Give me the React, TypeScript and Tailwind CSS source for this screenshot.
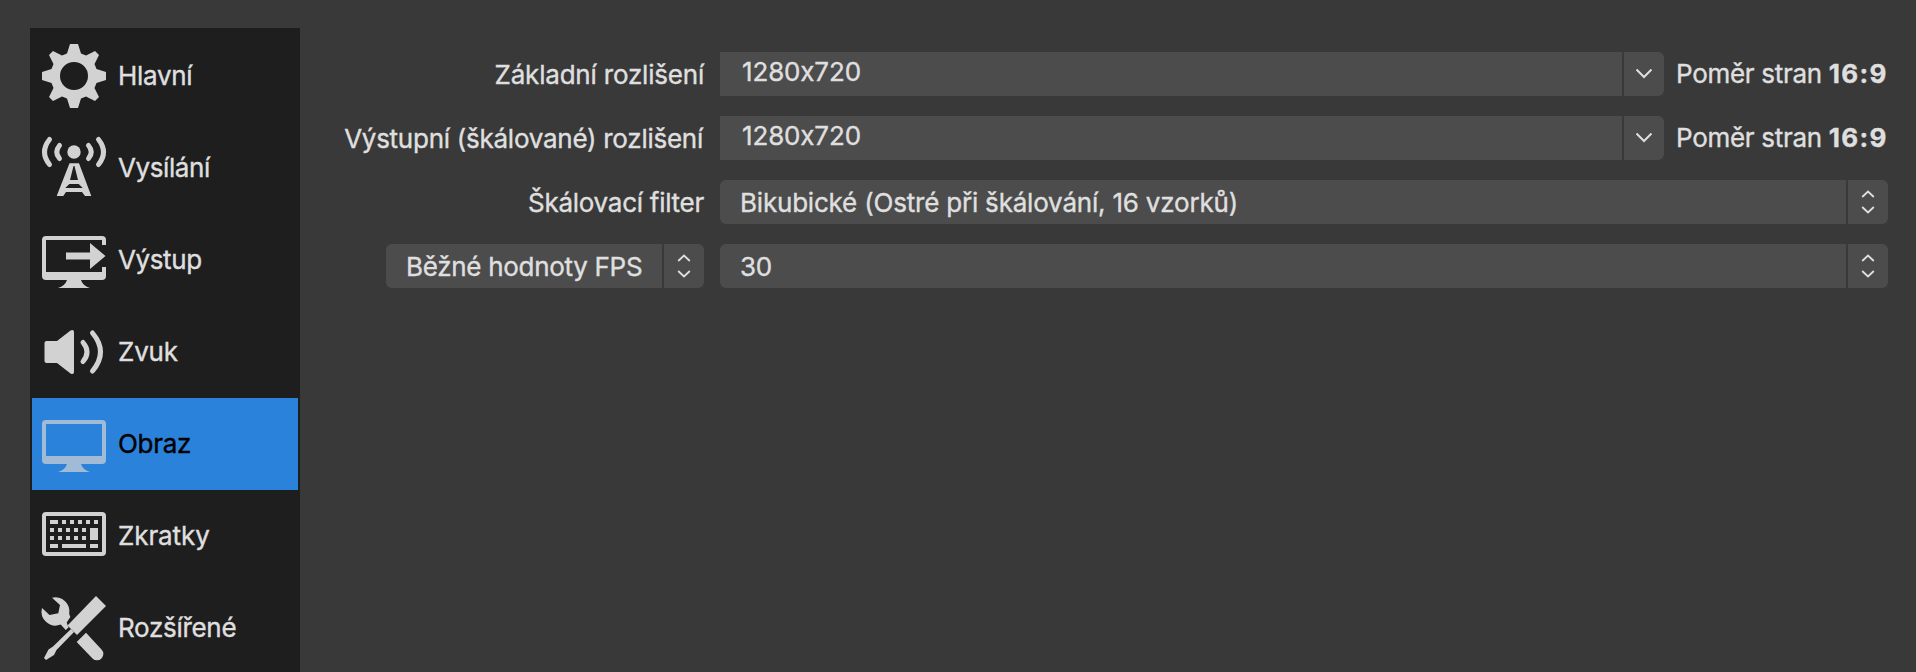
import React, { useState } from 'react';

interface NavItem {
  id: string;
  label: string;
  tracking: string;
  icon: React.ReactNode;
}

const navItems: NavItem[] = [
  {
    id: 'general',
    label: 'Hlavní',
    tracking: 'tracking-[-0.3px]',
    icon: (
      <path
        fillRule="evenodd"
        d="M28 0h8l3 9.500 5 2 9-4.500 4 4 -4.500 9 2 5 9.500 3v8l-9.500 3-2 5 4.500 9-4 4-9-4.500-5 2-3 9.500h-8l-3-9.500-5-2-9 4.500-4-4 4.500-9-2-5L0 36v-8l9.500-3 2-5L7 11l4-4 9 4.500 5-2zM32 18a14 14 0 1 0 0 28a14 14 0 1 0 0-28z"
      />
    ),
  },
  {
    id: 'stream',
    label: 'Vysílání',
    tracking: 'tracking-[-0.4px]',
    icon: (
      <>
        <circle cx="32" cy="16" r="6.700" />
        <g fill="none" stroke="currentColor" strokeWidth="5" strokeLinecap="round">
          <path d="M7.500 3.500Q-2.500 16 7.500 28.500" />
          <path d="M56.500 3.500Q66.500 16 56.500 28.500" />
          <path d="M17.500 9.500Q12 16 17.500 22.500" />
          <path d="M46.500 9.500Q52 16 46.500 22.500" />
        </g>
        <path
          fillRule="evenodd"
          d="M27.500 27.300h9.500L49.300 60H43l-3-4H24l-2.700 4h-6.600zM31.500 30L28 44h8l-3.500-14zM27.300 48l-4 4h17.400l-4-4z"
        />
      </>
    ),
  },
  {
    id: 'output',
    label: 'Výstup',
    tracking: 'tracking-[-0.4px]',
    icon: (
      <>
        <path d="M4 8h56a4 4 0 0 1 4 4v5h-4v-5H4v32h56v-5h4v9a4 4 0 0 1-4 4H39q2 6 9 8H16q7-2 9-8H4a4 4 0 0 1-4-4V12a4 4 0 0 1 4-4z" />
        <path d="M24 24.500h24v-9.500L63.500 28 48 41v-9.500H24z" />
      </>
    ),
  },
  {
    id: 'audio',
    label: 'Zvuk',
    tracking: 'tracking-[-0.2px]',
    icon: (
      <>
        <path d="M4.500 21h10.500L28.500 10.500q3.500-1.500 3.500 1.500v40q0 3-3.500 1.500L15 43H4.500Q2.500 43 2.500 41V23q0-2 2-2z" />
        <g fill="none" stroke="currentColor" strokeWidth="5" strokeLinecap="round">
          <path d="M41 22.500Q49 32 41 41.500" />
          <path d="M50.500 13Q66.500 32 50.500 51" />
        </g>
      </>
    ),
  },
  {
    id: 'video',
    label: 'Obraz',
    tracking: 'tracking-[-0.3px]',
    icon: (
      <path
        fillRule="evenodd"
        d="M4 8h56a4 4 0 0 1 4 4v36a4 4 0 0 1-4 4H39q2 6 9 8H16q7-2 9-8H4a4 4 0 0 1-4-4V12a4 4 0 0 1 4-4zM4 12v32h56V12z"
      />
    ),
  },
  {
    id: 'hotkeys',
    label: 'Zkratky',
    tracking: 'tracking-[-0.1px]',
    icon: (
      <>
        <path
          fillRule="evenodd"
          d="M4 8h56a4 4 0 0 1 4 4v36a4 4 0 0 1-4 4H4a4 4 0 0 1-4-4V12a4 4 0 0 1 4-4zM4 12v36h56V12z"
        />
        <path d="M8 16h8v4H8zM20 16h4v4h-4zM28 16h4v4h-4zM36 16h4v4h-4zM44 16h4v4h-4zM52 16h4v4h-4z" />
        <path d="M8 24h4v4H8zM16 24h4v4h-4zM24 24h4v4h-4zM32 24h4v4h-4zM40 24h4v4h-4zM48 24h8v12h-8z" />
        <path d="M8 32h4v4H8zM16 32h4v4h-4zM24 32h4v4h-4zM32 32h4v4h-4zM40 32h4v4h-4z" />
        <path d="M8 40h8v4H8zM20 40h24v4H20zM48 40h8v4h-8z" />
      </>
    ),
  },
  {
    id: 'advanced',
    label: 'Rozšířené',
    tracking: 'tracking-[-0.3px]',
    icon: (
      <>
        <path d="M54 0l10 10-29 29-9.500-9.500z" />
        <path d="M29 33l3 3-17.500 18L12 59l-8 5-2-2 4.500-8.500 4.500-3z" />
        <path d="M44 36.700L59.500 53.500a6.300 6.300 0 0 1-9 9L34.700 46z" />
        <path d="M10 1.800A14 14 0 0 1 27.200 18l1.100 3-3.600 5.500 1.800 5-2.800 2.500-5-5.400A14 14 0 0 1 0 12l7.500 7 8.800-1.700L18 9z" />
      </>
    ),
  },
];

function Chevrons() {
  return (
    <svg width="14" height="26" viewBox="0 0 14 26" fill="none" stroke="currentColor" strokeWidth="1.8">
      <path d="M1.200 8L7 2.500 12.800 8M1.200 18L7 23.500 12.800 18" />
    </svg>
  );
}

function ComboBox({ value }: { value: string }) {
  return (
    <div className="flex h-11 flex-1 gap-0.5">
      <div className="flex-1 bg-[#4c4c4c] pl-[22px] leading-[40px] tracking-[-0.15px]">{value}</div>
      <button className="flex w-10 items-center justify-center rounded-r-[6px] bg-[#4c4c4c]">
        <svg width="18" height="12" viewBox="0 0 18 12" fill="none" stroke="currentColor" strokeWidth="2">
          <path d="M1.500 1.500L9 9l7.500-7.500" />
        </svg>
      </button>
    </div>
  );
}

function PopupButton({ value, narrow }: { value: string; narrow?: boolean }) {
  return (
    <div className={`flex h-11 gap-0.5 ${narrow ? 'w-[318px] tracking-[-0.3px]' : 'flex-1 tracking-[-0.2px]'}`}>
      <div className="flex-1 rounded-l-[6px] bg-[#4c4c4c] pl-5 leading-[45px] whitespace-nowrap">{value}</div>
      <button className="flex w-10 items-center justify-center rounded-r-[6px] bg-[#4c4c4c]">
        <Chevrons />
      </button>
    </div>
  );
}

function RowLabel({ text, tracking }: { text: string; tracking: string }) {
  return (
    <div className={`mr-4 w-[404px] text-right leading-[46px] whitespace-nowrap ${tracking}`}>{text}</div>
  );
}

function AspectRatio() {
  return (
    <div className="w-[224px] pl-3 leading-[44px] tracking-[-0.3px] whitespace-nowrap">
      Poměr stran <span className="font-bold tracking-[1.3px]">16:9</span>
    </div>
  );
}

export default function App() {
  const [active, setActive] = useState('video');

  return (
    <div className="flex h-[672px] w-[1916px] overflow-hidden bg-[#393939] pt-7 pl-[30px] font-['Inter','Liberation_Sans',sans-serif] text-[26px] text-[#dfdfdf] [-webkit-text-stroke:0.4px]">
      {/* Sections */}
      <nav className="h-[660px] w-[270px] shrink-0 bg-[#1e1e1e] p-0.5">
        {navItems.map((item) => (
          <div
            key={item.id}
            onClick={() => setActive(item.id)}
            className={`flex h-[92px] items-center pl-2.5 ${active === item.id ? 'bg-[#2a82da] text-black' : ''}`}
          >
            <svg
              width="64"
              height="64"
              viewBox="0 0 64 64"
              fill="currentColor"
              className={`shrink-0 overflow-visible ${active === item.id ? 'text-[#a1bbd6]' : 'text-[#d2d2d2]'}`}
            >
              {item.icon}
            </svg>
            <span className={`pl-3 leading-[32px] ${item.tracking}`}>{item.label}</span>
          </div>
        ))}
      </nav>

      {/* Video settings */}
      <div className="flex flex-1 flex-col gap-5 pt-6 pr-7">
        <div className="flex h-11">
          <RowLabel text="Základní rozlišení" tracking="tracking-[-0.2px]" />
          <ComboBox value="1280x720" />
          <AspectRatio />
        </div>
        <div className="flex h-11">
          <RowLabel text="Výstupní (škálované) rozlišení" tracking="pr-px tracking-[-0.26px]" />
          <ComboBox value="1280x720" />
          <AspectRatio />
        </div>
        <div className="flex h-11">
          <RowLabel text="Škálovací filter" tracking="tracking-[-0.27px]" />
          <PopupButton value="Bikubické (Ostré při škálování, 16 vzorků)" />
        </div>
        <div className="flex h-11">
          <div className="mr-4 flex w-[404px] justify-end">
            <PopupButton value="Běžné hodnoty FPS" narrow />
          </div>
          <PopupButton value="30" />
        </div>
      </div>
    </div>
  );
}
